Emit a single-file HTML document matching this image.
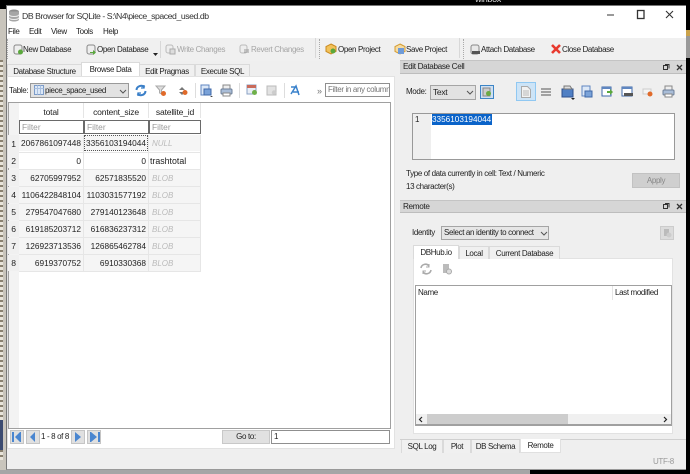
<!DOCTYPE html>
<html><head><meta charset="utf-8"><style>
html,body{margin:0;padding:0;background:#000}
#r{position:relative;width:690px;height:474px;overflow:hidden;background:#000;font-family:"Liberation Sans",sans-serif;font-size:8px;letter-spacing:-.36px;color:#222}
#r div{position:absolute;box-sizing:border-box;white-space:nowrap}
#r svg{position:absolute;overflow:visible}
.t{line-height:12px;height:12px}
.gr{color:#a5a5a5}
.rt{text-align:right}
.cell{background:#f5f5f5;height:16px;line-height:17px;font-size:8.3px;letter-spacing:0;padding:0 2px}
.hd{background:#fff;font-size:8.6px;letter-spacing:-.2px;line-height:16px;text-align:center;height:15px}
.f{border:1px solid #6a6a6a;background:#fff;height:15px;line-height:13px;color:#999;font-size:8.4px;letter-spacing:0;padding-left:2px}
.n{background:#f0f0f0;width:11px;left:8px;height:16px;line-height:16px;text-align:center;font-size:8.6px}
.b{color:#bbb;font-style:italic;font-size:8px;padding-left:3px}
.tab{background:#f0f0f0;border:1px solid #dadada;border-bottom:0;height:13px;line-height:13px;text-align:center}
.on{background:#fff}
</style></head><body><div id="r">
<!-- desktop strip -->
<div style="left:0;top:0;width:7px;height:474px;background:#c9c5bc"></div>
<div style="left:0;top:0;width:7px;height:9px;background:#000"></div>
<div style="left:0;top:60px;width:3px;height:400px;background:repeating-linear-gradient(180deg,#8a8170 0 2px,#e8e4da 2px 5px)"></div>
<div style="left:0;top:420px;width:3px;height:30px;background:#3c4b70"></div>
<div style="left:0;top:470px;width:530px;height:4px;background:#a6a6a6"></div>
<div style="left:686px;top:30px;width:4px;height:28px;background:linear-gradient(180deg,#caa24a 0 6px,#999 6px)"></div>
<div class="t" style="left:475px;top:-7px;color:#ddd;font-size:9px">winbox</div>
<!-- window -->
<div style="left:6px;top:5px;width:680px;height:465px;background:#efefef;border-left:1px solid #777;border-bottom:1px solid #999"></div>
<div style="left:7px;top:5px;width:679px;height:33px;background:#fff;border-top:1px solid #777"></div>
<svg style="left:8px;top:9px" width="12" height="13" viewBox="0 0 12 13"><ellipse cx="6" cy="2.500" rx="5" ry="2" fill="#8d8d8d"/><path d="M1 2.500v8c0 1.200 2.200 2 5 2s5-.8 5-2v-8" fill="#a6a6a6"/><path d="M1 5.500c0 1.200 2.200 2 5 2s5-.8 5-2M1 8.500c0 1.200 2.200 2 5 2s5-.8 5-2" fill="none" stroke="#eee"/></svg>
<div class="t" style="left:22px;top:10px;font-size:8.7px;letter-spacing:-.45px;color:#333">DB Browser for SQLite - S:\N4\piece_spaced_used.db</div>
<svg style="left:607px;top:9px" width="72" height="12" viewBox="0 0 72 12" fill="none" stroke="#333"><path d="M0 6h7"/><rect x="30.500" y="1.500" width="6.500" height="8" stroke-width="1.300"/><path d="M59 2l7 7M66 2l-7 7" stroke-width="1.100"/></svg>
<div class="t" style="left:8px;top:26px">File</div><div class="t" style="left:29px;top:26px">Edit</div><div class="t" style="left:51px;top:26px">View</div><div class="t" style="left:76px;top:26px">Tools</div><div class="t" style="left:103px;top:26px">Help</div>
<!-- toolbar -->
<div style="left:7px;top:38px;width:679px;height:23px;background:#f0f0f0"></div>
<div style="left:7px;top:39px;width:1px;height:20px;border-left:1px dotted #aaa"></div>
<div style="left:160px;top:41px;width:1px;height:17px;background:#d8d8d8"></div>
<div style="left:315px;top:38px;width:1px;height:20px;background:#d8d8d8"></div>
<div style="left:319px;top:39px;width:1px;height:20px;border-left:1px dotted #aaa"></div>
<div style="left:459px;top:38px;width:1px;height:20px;background:#d8d8d8"></div>
<div style="left:463px;top:39px;width:1px;height:20px;border-left:1px dotted #aaa"></div>
<svg style="left:13px;top:44px" width="11" height="11" viewBox="0 0 11 11"><rect x="1" y="1" width="8" height="9" rx="2" fill="#eee" stroke="#888"/><circle cx="7.500" cy="8" r="2.500" fill="#5aa83c"/></svg>
<div class="t" style="left:23px;top:44px">New Database</div>
<svg style="left:86px;top:44px" width="11" height="11" viewBox="0 0 11 11"><rect x="1" y="1" width="8" height="9" rx="2" fill="#eee" stroke="#888"/><path d="M4 8h3V6l3 2.500L7 11V9H4z" fill="#5aa83c"/></svg>
<div class="t" style="left:97px;top:44px">Open Database</div>
<svg style="left:153px;top:53px" width="5" height="3"><path d="M0 0h5L2.500 3z" fill="#222"/></svg>
<svg style="left:165px;top:44px" width="11" height="11" viewBox="0 0 11 11"><rect x="1" y="1" width="7" height="8" rx="2" fill="#eee" stroke="#bbb"/><rect x="5" y="5" width="5" height="5" fill="#ddd" stroke="#aaa"/></svg>
<div class="t gr" style="left:177px;top:44px">Write Changes</div>
<svg style="left:239px;top:44px" width="11" height="11" viewBox="0 0 11 11"><rect x="1" y="1" width="7" height="8" rx="2" fill="#eee" stroke="#bbb"/><path d="M5 6h5M5 8h5" stroke="#999"/></svg>
<div class="t gr" style="left:251px;top:44px">Revert Changes</div>
<svg style="left:325px;top:43px" width="12" height="12" viewBox="0 0 12 12"><path d="M6 1l5 2.500v5L6 11 1 8.500v-5z" fill="#f2c25a" stroke="#c98a20"/><circle cx="8" cy="8" r="2.500" fill="#5aa83c"/></svg>
<div class="t" style="left:338px;top:44px">Open Project</div>
<svg style="left:394px;top:43px" width="12" height="12" viewBox="0 0 12 12"><path d="M6 1l5 2.500v5L6 11 1 8.500v-5z" fill="#f7dca0" stroke="#d39a30"/><rect x="4" y="5" width="6" height="6" fill="#6f9bd8"/></svg>
<div class="t" style="left:406px;top:44px">Save Project</div>
<svg style="left:470px;top:44px" width="11" height="12" viewBox="0 0 11 12"><rect x="1" y="1" width="8" height="9" rx="2" fill="#e8e8e8" stroke="#888"/><rect x="2" y="7" width="8" height="3" fill="#555"/></svg>
<div class="t" style="left:481px;top:44px">Attach Database</div>
<svg style="left:551px;top:44px" width="10" height="10" viewBox="0 0 10 10"><path d="M1 1l8 8M9 1L1 9" stroke="#e8392e" stroke-width="2.600"/></svg>
<div class="t" style="left:562px;top:44px">Close Database</div>
<!-- main tabs -->
<div class="tab" style="left:7px;top:64px;width:75px">Database Structure</div>
<div class="tab on" style="left:81px;top:62px;width:59px;height:15px;line-height:14px">Browse Data</div>
<div class="tab" style="left:139px;top:64px;width:56px">Edit Pragmas</div>
<div class="tab" style="left:195px;top:64px;width:55px">Execute SQL</div>
<div style="left:7px;top:76px;width:388px;height:373px;background:#fff;border:1px solid #e2e2e2"></div>
<!-- table toolbar -->
<div class="t" style="left:9px;top:85px">Table:</div>
<div style="left:30px;top:83px;width:99px;height:15px;background:#e2e2e2;border:1px solid #9a9a9a"></div>
<svg style="left:34px;top:85px" width="10" height="10"><rect x=".5" y=".5" width="9" height="9" fill="#dce8f7" stroke="#7d9cc8"/><path d="M.5 3.500h9M3.500 .5v9M6.500 .5v9" stroke="#a9c0e0"/></svg>
<div class="t" style="left:45px;top:85px">piece_space_used</div>
<svg style="left:119px;top:89px" width="8" height="5"><path d="M1 1l3 3 3-3" fill="none" stroke="#555"/></svg>
<svg style="left:135px;top:84px" width="12" height="13" viewBox="0 0 12 13" fill="none" stroke="#3a7fc8" stroke-width="2"><path d="M1.500 6a4.500 4.500 0 0 1 8-2.500M10.500 7a4.500 4.500 0 0 1-8 2.500"/><path d="M9 1v3H6M3 12V9h3" stroke-width="1.300"/></svg>
<svg style="left:156px;top:85px" width="11" height="12" viewBox="0 0 11 12"><path d="M0 1h9L5.500 5v4L3.500 8V5z" fill="#ddd" stroke="#aaa"/><circle cx="7.500" cy="8.500" r="2.500" fill="#e06a2a"/></svg>
<svg style="left:178px;top:85px" width="10" height="12" viewBox="0 0 10 12"><path d="M1 5l3-3 3 3zM1 7l3 3 3-3z" fill="#777"/><circle cx="7" cy="7.500" r="2.500" fill="#e06a2a"/></svg>
<div style="left:195px;top:83px;width:1px;height:15px;background:#ddd"></div>
<svg style="left:200px;top:84px" width="13" height="13" viewBox="0 0 13 13"><rect x="1" y="1" width="8" height="10" fill="#dce8f7" stroke="#5f86c0"/><rect x="4" y="5" width="7" height="6" fill="#7aa2d8" stroke="#3f68a8"/><path d="M10 12h3l-1.500 1z" fill="#222"/></svg>
<svg style="left:220px;top:84px" width="13" height="13" viewBox="0 0 13 13"><rect x="3" y="1" width="7" height="4" fill="#eee" stroke="#888"/><rect x="1" y="5" width="11" height="5" rx="1" fill="#a9bdd8" stroke="#6d7f98"/><rect x="3" y="9" width="7" height="3" fill="#fff" stroke="#888"/></svg>
<div style="left:239px;top:83px;width:1px;height:15px;background:#ddd"></div>
<svg style="left:246px;top:84px" width="13" height="13" viewBox="0 0 13 13"><rect x="1" y="1" width="9" height="9" fill="#e9eef6" stroke="#8aa2c4"/><rect x="1" y="1" width="9" height="3" fill="#c96a5a"/><circle cx="8.500" cy="8.500" r="2.500" fill="#6fb04a"/></svg>
<svg style="left:266px;top:84px" width="12" height="13" viewBox="0 0 12 13"><rect x="1" y="2" width="9" height="9" fill="#e2e2e2" stroke="#bbb"/><circle cx="8" cy="8.500" r="2.200" fill="#ccc"/></svg>
<div style="left:284px;top:83px;width:1px;height:15px;background:#ddd"></div>
<svg style="left:290px;top:84px" width="12" height="13" viewBox="0 0 12 13" fill="none" stroke="#3a82cc" stroke-width="1.500"><path d="M1 10L6 2l3 9M3 8h6M1 3h5"/></svg>
<div class="t" style="left:317px;top:85px;color:#777;font-size:9px">»</div>
<div style="left:325px;top:83px;width:65px;height:14px;border:1px solid #8f8f8f;background:#fff;line-height:12px;color:#777;padding-left:2px;overflow:hidden">Filter in any column</div>
<!-- table -->
<div style="left:8px;top:102px;width:383px;height:327px;background:#fff;border:1px solid #a0a0a0"></div>
<div style="left:9px;top:103px;width:10px;height:325px;background:#f3f3f3"></div>
<div class="hd" style="left:19px;top:104px;width:64px">total</div>
<div class="hd" style="left:84px;top:104px;width:64px">content_size</div>
<div class="hd" style="left:149px;top:104px;width:52px">satellite_id</div>
<div style="left:83px;top:103px;width:1px;height:15px;background:#e5e5e5"></div><div style="left:148px;top:103px;width:1px;height:15px;background:#e5e5e5"></div><div style="left:200px;top:103px;width:1px;height:15px;background:#e5e5e5"></div>
<div class="f" style="left:19px;top:120px;width:65px;height:14px;line-height:12px">Filter</div>
<div class="f" style="left:84px;top:120px;width:65px;height:14px;line-height:12px">Filter</div>
<div class="f" style="left:149px;top:120px;width:52px;height:14px;line-height:12px">Filter</div>

<div class="n" style="top:135px;height:17px;line-height:18px">1</div>
<div class="cell rt" style="left:19px;top:135px;width:64px">2067861097448</div>
<div class="cell rt" style="left:84px;top:135px;width:64px;border:1px dotted #555;line-height:15px;padding:0 1px">3356103194044</div>
<div class="cell b" style="left:149px;top:135px;width:51px;font-size:8px">NULL</div>
<div class="n" style="top:152px;line-height:18px">2</div>
<div class="cell rt" style="left:19px;top:153px;width:64px;background:#fff">0</div>
<div class="cell rt" style="left:84px;top:153px;width:64px;background:#fff">0</div>
<div class="cell" style="left:149px;top:153px;width:51px;background:#fff;padding-left:1px;font-size:8.8px">trashtotal</div>
<div style="left:19px;top:152px;width:182px;height:1px;background:#e6e6e6"></div>
<div style="left:19px;top:169px;width:182px;height:1px;background:#e6e6e6"></div>

<div class="n" style="top:170px">3</div>
<div class="cell rt" style="left:19px;top:170px;width:64px">62705997952</div>
<div class="cell rt" style="left:84px;top:170px;width:64px">62571835520</div>
<div class="cell b" style="left:149px;top:170px;width:51px;font-size:8px">BLOB</div>
<div class="n" style="top:187px">4</div>
<div class="cell rt" style="left:19px;top:187px;width:64px">1106422848104</div>
<div class="cell rt" style="left:84px;top:187px;width:64px">1103031577192</div>
<div class="cell b" style="left:149px;top:187px;width:51px;font-size:8px">BLOB</div>
<div class="n" style="top:204px">5</div>
<div class="cell rt" style="left:19px;top:204px;width:64px">279547047680</div>
<div class="cell rt" style="left:84px;top:204px;width:64px">279140123648</div>
<div class="cell b" style="left:149px;top:204px;width:51px;font-size:8px">BLOB</div>
<div class="n" style="top:221px">6</div>
<div class="cell rt" style="left:19px;top:221px;width:64px">619185203712</div>
<div class="cell rt" style="left:84px;top:221px;width:64px">616836237312</div>
<div class="cell b" style="left:149px;top:221px;width:51px;font-size:8px">BLOB</div>
<div class="n" style="top:238px">7</div>
<div class="cell rt" style="left:19px;top:238px;width:64px">126923713536</div>
<div class="cell rt" style="left:84px;top:238px;width:64px">126865462784</div>
<div class="cell b" style="left:149px;top:238px;width:51px;font-size:8px">BLOB</div>
<div class="n" style="top:255px">8</div>
<div class="cell rt" style="left:19px;top:255px;width:64px">6919370752</div>
<div class="cell rt" style="left:84px;top:255px;width:64px">6910330368</div>
<div class="cell b" style="left:149px;top:255px;width:51px;font-size:8px">BLOB</div>
<div style="left:19px;top:186px;width:182px;height:1px;background:#e6e6e6"></div>
<div style="left:19px;top:203px;width:182px;height:1px;background:#e6e6e6"></div>
<div style="left:19px;top:220px;width:182px;height:1px;background:#e6e6e6"></div>
<div style="left:19px;top:237px;width:182px;height:1px;background:#e6e6e6"></div>
<div style="left:19px;top:254px;width:182px;height:1px;background:#e6e6e6"></div>
<div style="left:19px;top:271px;width:182px;height:1px;background:#e6e6e6"></div>
<div style="left:83px;top:135px;width:1px;height:137px;background:#e6e6e6"></div>
<div style="left:148px;top:135px;width:1px;height:137px;background:#e6e6e6"></div>
<div style="left:200px;top:135px;width:1px;height:137px;background:#e6e6e6"></div>
<!-- nav -->
<div style="left:10px;top:430px;width:14px;height:14px;background:#e0e0e0;border:1px solid #c5c5c5"></div>
<div style="left:26px;top:430px;width:14px;height:14px;background:#e0e0e0;border:1px solid #c5c5c5"></div>
<div style="left:71px;top:430px;width:14px;height:14px;background:#e0e0e0;border:1px solid #c5c5c5"></div>
<div style="left:87px;top:430px;width:14px;height:14px;background:#e0e0e0;border:1px solid #c5c5c5"></div>
<svg style="left:12px;top:432px" width="11" height="10"><path d="M0 0h2v10H0zM9 0v10H8L3 5l5-5z" fill="#4a86d0"/></svg>
<svg style="left:29px;top:432px" width="8" height="10"><path d="M6 0v10L1 5z" fill="#4a86d0"/></svg>
<svg style="left:74px;top:432px" width="8" height="10"><path d="M1 0v10l6-5z" fill="#4a86d0"/></svg>
<svg style="left:89px;top:432px" width="11" height="10"><path d="M9 0h2v10H9zM1 0v10h1l6-5-6-5z" fill="#4a86d0"/></svg>
<div class="t" style="left:41px;top:431px">1 - 8 of 8</div>
<div style="left:222px;top:430px;width:48px;height:14px;background:#e1e1e1;border:1px solid #c8c8c8;text-align:center;line-height:12px">Go to:</div>
<div style="left:271px;top:430px;width:119px;height:14px;background:#fff;border:1px solid #8f8f8f;line-height:12px;padding-left:2px">1</div>
<!-- Edit cell dock -->
<div style="left:400px;top:60px;width:286px;height:14px;background:#d6d6d6;border-top:1px solid #c4c4c4;border-bottom:1px solid #bdbdbd;line-height:12px;font-size:8.2px;padding-left:3px">Edit Database Cell</div>
<svg style="left:662px;top:63px" width="22" height="8" fill="none" stroke="#333"><rect x="1.500" y="2.500" width="4" height="4"/><path d="M3 1.500h4v4"/><path d="M15 2l5 5M20 2l-5 5" stroke-width="1.300"/></svg>
<div class="t" style="left:406px;top:86px">Mode:</div>
<div style="left:430px;top:85px;width:46px;height:15px;background:#e2e2e2;border:1px solid #a5a5a5;line-height:13px;padding-left:2px;font-size:8.6px">Text</div>
<svg style="left:466px;top:90px" width="8" height="5"><path d="M1 1l3 3 3-3" fill="none" stroke="#555"/></svg>
<div style="left:480px;top:85px;width:14px;height:14px;background:#cfe0f2;border:1px solid #3d85c6"></div>
<svg style="left:482px;top:87px" width="10" height="10"><rect x="1" y="1" width="7" height="8" fill="#ccc" stroke="#888"/><circle cx="6.500" cy="6.500" r="2.500" fill="#6aaa44"/></svg>
<div style="left:516px;top:82px;width:20px;height:19px;background:#cde4f7;border:1px solid #90c8f2"></div>
<svg style="left:521px;top:86px" width="10" height="12"><path d="M.5.500h6l3 3v8h-9z" fill="#f2f2f2" stroke="#aaa"/><path d="M2 5h6M2 7h6M2 9h6" stroke="#bbb"/></svg>
<svg style="left:541px;top:88px" width="10" height="9"><path d="M0 1h10M0 4h10M0 7h10" stroke="#888" stroke-width="1.500"/></svg>
<svg style="left:561px;top:85px" width="14" height="15"><rect x="1" y="4" width="11" height="8" fill="#4f7fc4" stroke="#2d4f8c"/><path d="M3 4V1h6l2 3z" fill="#ddd" stroke="#777"/><path d="M10 13h4l-2 2z" fill="#222"/></svg>
<svg style="left:581px;top:85px" width="13" height="14"><rect x="1" y="1" width="8" height="10" fill="#dce8f7" stroke="#5f86c0"/><rect x="4" y="6" width="7" height="6" fill="#7aa2d8" stroke="#3f68a8"/></svg>
<svg style="left:601px;top:86px" width="13" height="12"><rect x="1" y="1" width="9" height="9" fill="#fff" stroke="#3f68a8"/><rect x="1" y="1" width="9" height="2" fill="#5f86c0"/><path d="M6 5h3V3l3 3-3 3V7H6z" fill="#5aa83c"/></svg>
<svg style="left:621px;top:86px" width="13" height="12"><rect x="1" y="1" width="10" height="9" fill="#fff" stroke="#3f68a8"/><rect x="1" y="1" width="10" height="2" fill="#5f86c0"/><rect x="3" y="7" width="9" height="3" fill="#555"/></svg>
<svg style="left:642px;top:88px" width="12" height="10"><rect x="1" y="1" width="8" height="5" fill="#f4f4f4" stroke="#ccc"/><circle cx="8" cy="6" r="2.500" fill="#e06a2a"/></svg>
<svg style="left:662px;top:85px" width="13" height="13"><rect x="3" y="1" width="7" height="4" fill="#eee" stroke="#888"/><rect x="1" y="5" width="11" height="5" rx="1" fill="#a9bdd8" stroke="#6d7f98"/><rect x="3" y="9" width="7" height="3" fill="#fff" stroke="#888"/></svg>
<div style="left:412px;top:113px;width:263px;height:47px;background:#fff;border:1px solid #999"></div>
<div style="left:413px;top:114px;width:18px;height:45px;background:#efefef"></div>
<div class="t" style="left:415px;top:114px">1</div>
<div style="left:432px;top:114px;width:60px;height:11px;background:#0a63c9;color:#fff;line-height:11px;font-size:8.2px;letter-spacing:0">3356103194044</div>
<div class="t" style="left:406px;top:168px">Type of data currently in cell: Text / Numeric</div>
<div class="t" style="left:406px;top:181px">13 character(s)</div>
<div style="left:632px;top:173px;width:48px;height:15px;background:#cfcfcf;border:1px solid #c2c2c2;text-align:center;line-height:13px;color:#888">Apply</div>
<!-- Remote -->
<div style="left:400px;top:200px;width:286px;height:13px;background:#d6d6d6;border-top:1px solid #c4c4c4;border-bottom:1px solid #bdbdbd;line-height:11px;font-size:8.2px;padding-left:3px">Remote</div>
<svg style="left:662px;top:202px" width="22" height="8" fill="none" stroke="#333"><rect x="1.500" y="2.500" width="4" height="4"/><path d="M3 1.500h4v4"/><path d="M15 2l5 5M20 2l-5 5" stroke-width="1.300"/></svg>
<div class="t" style="left:412px;top:227px">Identity</div>
<div style="left:441px;top:226px;width:108px;height:14px;background:#e6e6e6;border:1px solid #a5a5a5;line-height:12px;padding-left:2px">Select an identity to connect</div>
<svg style="left:540px;top:231px" width="8" height="5"><path d="M1 1l3 3 3-3" fill="none" stroke="#555"/></svg>
<div style="left:660px;top:226px;width:14px;height:14px;background:#dcdcdc;border:1px solid #ccc"></div>
<svg style="left:663px;top:229px" width="9" height="9"><rect x="1" y="0" width="5" height="7" fill="#bbb"/><circle cx="6" cy="6" r="2.500" fill="#ccc"/></svg>
<div style="left:413px;top:258px;width:260px;height:176px;background:#fff;border:1px solid #e2e2e2"></div>
<div class="tab on" style="left:413px;top:245px;width:46px;height:14px">DBHub.io</div>
<div class="tab" style="left:459px;top:246px;width:30px">Local</div>
<div class="tab" style="left:489px;top:246px;width:71px">Current Database</div>
<svg style="left:420px;top:263px" width="12" height="12" fill="none" stroke="#aaa" stroke-width="1.600"><path d="M1 5a4.500 4.500 0 0 1 8-2M11 7a4.500 4.500 0 0 1-8 2"/><path d="M9 1v3H6M3 11V8h3" stroke-width="1"/></svg>
<svg style="left:442px;top:264px" width="11" height="11"><rect x="1" y="0" width="6" height="9" fill="#bbb"/><circle cx="7" cy="7.500" r="2.500" fill="#ddd" stroke="#aaa"/></svg>
<div style="left:415px;top:285px;width:257px;height:141px;background:#fff;border:1px solid #a0a0a0;border-bottom:2px solid #a0a0a0"></div>
<div class="t" style="left:418px;top:287px">Name</div>
<div style="left:612px;top:286px;width:1px;height:14px;background:#e5e5e5"></div>
<div class="t" style="left:615px;top:287px">Last modified</div>
<div style="left:416px;top:414px;width:255px;height:10px;background:#f0f0f0"></div>
<div style="left:427px;top:414px;width:141px;height:10px;background:#cdcdcd"></div>
<svg style="left:418px;top:416px" width="5" height="7" fill="none" stroke="#222" stroke-width="1.200"><path d="M4 1L1.500 3.500 4 6"/></svg>
<svg style="left:663px;top:416px" width="5" height="7" fill="none" stroke="#222" stroke-width="1.200"><path d="M1 1l2.500 2.500L1 6"/></svg>
<!-- bottom tabs -->
<div style="left:400px;top:439px;width:286px;height:1px;background:#d0d0d0"></div>
<div class="tab" style="left:401px;top:440px;width:42px;border-top:0">SQL Log</div>
<div class="tab" style="left:443px;top:440px;width:28px;border-top:0">Plot</div>
<div class="tab" style="left:471px;top:440px;width:49px;border-top:0">DB Schema</div>
<div class="tab on" style="left:520px;top:439px;width:41px;height:14px;border:1px solid #e0e0e0;border-top:0">Remote</div>
<div class="t gr" style="left:653px;top:456px;color:#999">UTF-8</div>
</div></body></html>
